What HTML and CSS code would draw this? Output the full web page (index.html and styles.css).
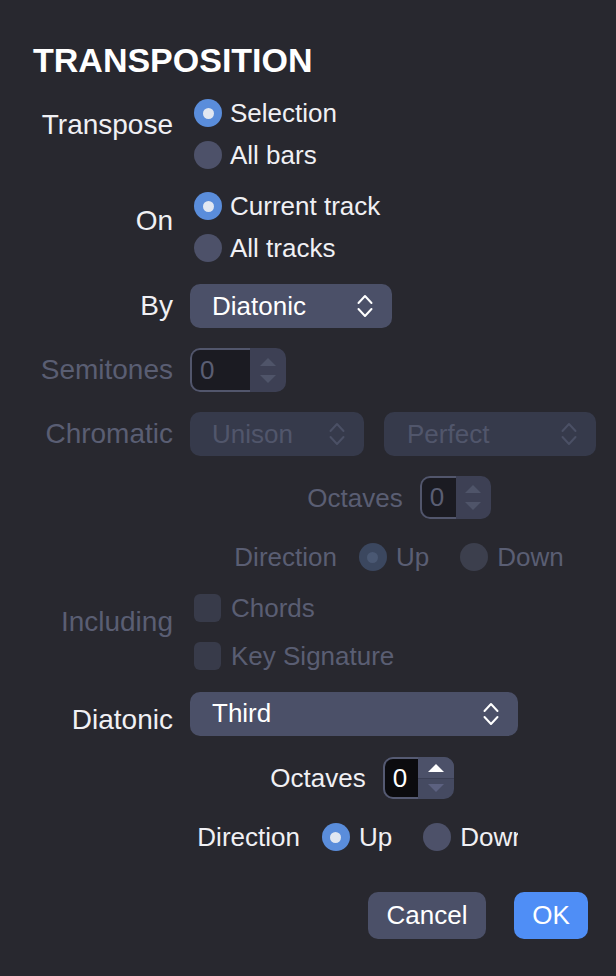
FILE: index.html
```html
<!DOCTYPE html>
<html>
<head>
<meta charset="utf-8">
<link rel="stylesheet" href="styles.css">
</head>
<body>
<div class="dialog">
  <h1 class="title">TRANSPOSITION</h1>

  <div class="row r-transpose">
    <div class="label lab-transpose">Transpose</div>
    <div class="options">
      <div class="opt"><span class="radio on"></span><span>Selection</span></div>
      <div class="opt"><span class="radio"></span><span>All bars</span></div>
    </div>
  </div>

  <div class="row r-on">
    <div class="label lab-on">On</div>
    <div class="options">
      <div class="opt"><span class="radio on"></span><span>Current track</span></div>
      <div class="opt"><span class="radio"></span><span>All tracks</span></div>
    </div>
  </div>

  <div class="row r-by">
    <div class="label">By</div>
    <div class="select sel-by">
      <span>Diatonic</span>
      <svg class="chev" width="16" height="24" viewBox="0 0 16 24"><path d="M1.5 9 L8 2 L14.5 9 M1.5 15 L8 22 L14.5 15" fill="none" stroke="currentColor" stroke-width="2" stroke-linecap="round" stroke-linejoin="round"/></svg>
    </div>
  </div>

  <div class="row r-semi disabled">
    <div class="label">Semitones</div>
    <div class="spinner sp-semi">
      <div class="sp-input">0</div>
      <div class="sp-step">
        <svg width="18" height="8" viewBox="0 0 18 8"><path d="M1 8 L9 0 L17 8 Z" fill="currentColor"/></svg>
        <svg width="18" height="8" viewBox="0 0 18 8"><path d="M1 0 L9 8 L17 0 Z" fill="currentColor"/></svg>
      </div>
    </div>
  </div>

  <div class="row r-chrom disabled">
    <div class="label">Chromatic</div>
    <div class="selects">
      <div class="select sel-unison">
        <span>Unison</span>
        <svg class="chev" width="16" height="24" viewBox="0 0 16 24"><path d="M1.5 9 L8 2 L14.5 9 M1.5 15 L8 22 L14.5 15" fill="none" stroke="currentColor" stroke-width="2" stroke-linecap="round" stroke-linejoin="round"/></svg>
      </div>
      <div class="select sel-perfect">
        <span>Perfect</span>
        <svg class="chev" width="16" height="24" viewBox="0 0 16 24"><path d="M1.5 9 L8 2 L14.5 9 M1.5 15 L8 22 L14.5 15" fill="none" stroke="currentColor" stroke-width="2" stroke-linecap="round" stroke-linejoin="round"/></svg>
      </div>
    </div>
  </div>

  <div class="sub sub-chrom disabled">
    <div class="sub-inner">
      <div class="subrow s-oct">
        <div class="sublabel">Octaves</div>
        <div class="spinner sp-oct">
          <div class="sp-input">0</div>
          <div class="sp-step">
            <svg width="18" height="8" viewBox="0 0 18 8"><path d="M1 8 L9 0 L17 8 Z" fill="currentColor"/></svg>
            <svg width="18" height="8" viewBox="0 0 18 8"><path d="M1 0 L9 8 L17 0 Z" fill="currentColor"/></svg>
          </div>
        </div>
      </div>
      <div class="subrow s-dir">
        <div class="sublabel">Direction</div>
        <div class="opt"><span class="radio on"></span><span>Up</span></div>
        <div class="opt opt-down"><span class="radio"></span><span>Down</span></div>
      </div>
    </div>
  </div>

  <div class="row r-incl disabled">
    <div class="label lab-incl">Including</div>
    <div class="options">
      <div class="opt chk-opt"><span class="check"></span><span>Chords</span></div>
      <div class="opt chk-opt"><span class="check"></span><span>Key Signature</span></div>
    </div>
  </div>

  <div class="row r-diat">
    <div class="label lab-diat">Diatonic</div>
    <div class="select sel-third">
      <span>Third</span>
      <svg class="chev" width="16" height="24" viewBox="0 0 16 24"><path d="M1.5 9 L8 2 L14.5 9 M1.5 15 L8 22 L14.5 15" fill="none" stroke="currentColor" stroke-width="2" stroke-linecap="round" stroke-linejoin="round"/></svg>
    </div>
  </div>

  <div class="sub sub-diat">
    <div class="sub-inner">
      <div class="subrow s-oct2">
        <div class="sublabel">Octaves</div>
        <div class="spinner sp-oct2 active">
          <div class="sp-input">0</div>
          <div class="sp-step">
            <div class="half up"><svg width="18" height="8" viewBox="0 0 18 8"><path d="M1 8 L9 0 L17 8 Z" fill="currentColor"/></svg></div>
            <div class="half down"><svg width="18" height="8" viewBox="0 0 18 8"><path d="M1 0 L9 8 L17 0 Z" fill="currentColor"/></svg></div>
          </div>
        </div>
      </div>
      <div class="subrow s-dir2">
        <div class="sublabel">Direction</div>
        <div class="opt"><span class="radio on"></span><span>Up</span></div>
        <div class="opt opt-down"><span class="radio"></span><span>Down</span></div>
      </div>
    </div>
  </div>

  <div class="buttons">
    <div class="btn btn-cancel">Cancel</div>
    <div class="btn btn-ok">OK</div>
  </div>
</div>
</body>
</html>
```

FILE: styles.css
```css
html, body {
  margin: 0;
  padding: 0;
}
body {
  width: 616px;
  height: 976px;
  overflow: hidden;
  background: #28282f;
  font-family: "Liberation Sans", Arial, sans-serif;
  font-size: 26px;
  color: #f0f0f4;
}
.dialog {
  display: flex;
  flex-direction: column;
}
.title {
  margin: 40px 0 0 0;
  padding-left: 33px;
  font-size: 34px;
  line-height: 40px;
  font-weight: bold;
  color: #ffffff;
}
.row {
  display: grid;
  grid-template-columns: 173px auto;
  column-gap: 17px;
  align-items: center;
  justify-items: start;
}
.label {
  justify-self: end;
  font-size: 28px;
  line-height: 32px;
  white-space: nowrap;
}
.lab-transpose { margin-bottom: 18px; }
.lab-on { margin-bottom: 13px; }
.lab-incl { margin-bottom: 20px; }
.lab-diat { margin-top: 12px; }

.r-transpose { margin-top: 12px; }
.r-on { margin-top: 9px; }
.r-by { margin-top: 15px; }
.r-semi { margin-top: 20px; }
.r-chrom { margin-top: 20px; }
.r-incl { margin-top: 5px; }
.r-diat { margin-top: 12px; height: 44px; }

.options {
  display: flex;
  flex-direction: column;
}
.opt {
  display: flex;
  align-items: center;
  height: 42px;
  padding-left: 4px;
  gap: 8px;
  white-space: nowrap;
}
.chk-opt {
  height: 48px;
  gap: 10px;
}
.radio {
  width: 28px;
  height: 28px;
  border-radius: 50%;
  background: #4d5169;
  flex: none;
  position: relative;
}
.radio.on {
  background: #5a8ddb;
}
.radio.on::after {
  content: "";
  position: absolute;
  left: 8.5px;
  top: 8.5px;
  width: 11px;
  height: 11px;
  border-radius: 50%;
  background: #e1e7f1;
}
.check {
  width: 27px;
  height: 28px;
  border-radius: 6px;
  background: #383b4a;
  flex: none;
}

.select {
  height: 44px;
  border-radius: 10px;
  background: #4b5068;
  display: flex;
  align-items: center;
  justify-content: space-between;
  padding: 0 19px 0 22px;
  box-sizing: border-box;
  color: #ffffff;
}
.chev { display: block; color: #ffffff; }
.sel-by { width: 202px; }
.sel-third { width: 328px; }
.sel-third span { margin-top: -2px; }
.selects {
  display: flex;
  gap: 20px;
}
.sel-unison { width: 174px; padding-left: 22px; }
.sel-perfect { width: 212px; padding-left: 23px; }

.spinner {
  display: flex;
  height: 43px;
  border-radius: 10px;
  overflow: hidden;
  background: #3d4054;
}
.sp-semi { width: 96px; height: 44px; }
.sp-input {
  box-sizing: border-box;
  border: 2px solid #52566c;
  border-right: none;
  border-radius: 10px 0 0 10px;
  background: #1b1b22;
  display: flex;
  align-items: center;
  padding-left: 8px;
  color: #5a5e73;
}
.sp-semi .sp-input { width: 60px; }
.sp-oct .sp-input { width: 36px; }
.sp-oct { width: 71px; }
.sp-step {
  flex: 1;
  display: flex;
  flex-direction: column;
  align-items: center;
  justify-content: center;
  gap: 9px;
  color: #4f5469;
}
.sp-step svg { display: block; }

.sp-oct2 { width: 71px; height: 42px; background: #454a61; }
.sp-oct2 .sp-input {
  width: 35px;
  background: #0b0b0e;
  border-color: #555a72;
  color: #ffffff;
}
.sp-oct2 .sp-step { gap: 0; }
.half {
  flex: 1;
  width: 100%;
  display: flex;
  align-items: center;
  justify-content: center;
}
.half.up {
  background: #4c5169;
  color: #ffffff;
  border-bottom: 1px solid #3c4055;
  padding-top: 2px;
}
.half.down {
  color: #5c6180;
  padding-bottom: 2px;
}

.sub {
  margin-left: 190px;
  overflow: hidden;
}
.sub-chrom { width: 418px; }
.sub-chrom .sub-inner { width: 418px; }
.sub-diat { width: 328px; }
.sub-diat .sub-inner { width: 344px; }
.subrow {
  display: flex;
  justify-content: center;
  align-items: center;
  white-space: nowrap;
}
.sublabel { line-height: 30px; }
.s-oct { margin-top: 20px; gap: 17px; }
.s-oct2 { margin-top: 21px; gap: 17px; }
.s-dir, .s-dir2 { height: 44px; margin-top: 16px; }
.subrow .opt { padding-left: 0; gap: 9px; height: 44px; }
.subrow .sublabel + .opt { margin-left: 22px; }
.subrow .opt-down { margin-left: 31px; }

.disabled { color: #5a5e73; }
.disabled .select { background: #363a4b; color: #51566b; }
.disabled .chev { color: #4b5065; }
.disabled .radio { background: #3c3f4d; }
.disabled .radio.on { background: #3b475f; }
.disabled .radio.on::after { background: #4a5873; }

.buttons {
  display: flex;
  justify-content: flex-end;
  gap: 28px;
  padding-right: 28px;
  margin-top: 33px;
}
.btn {
  height: 47px;
  border-radius: 10px;
  display: flex;
  align-items: center;
  justify-content: center;
  color: #ffffff;
  box-sizing: border-box;
}
.btn-cancel { width: 118px; background: #4b5068; }
.btn-ok { width: 74px; background: #4f8ef6; }
```
